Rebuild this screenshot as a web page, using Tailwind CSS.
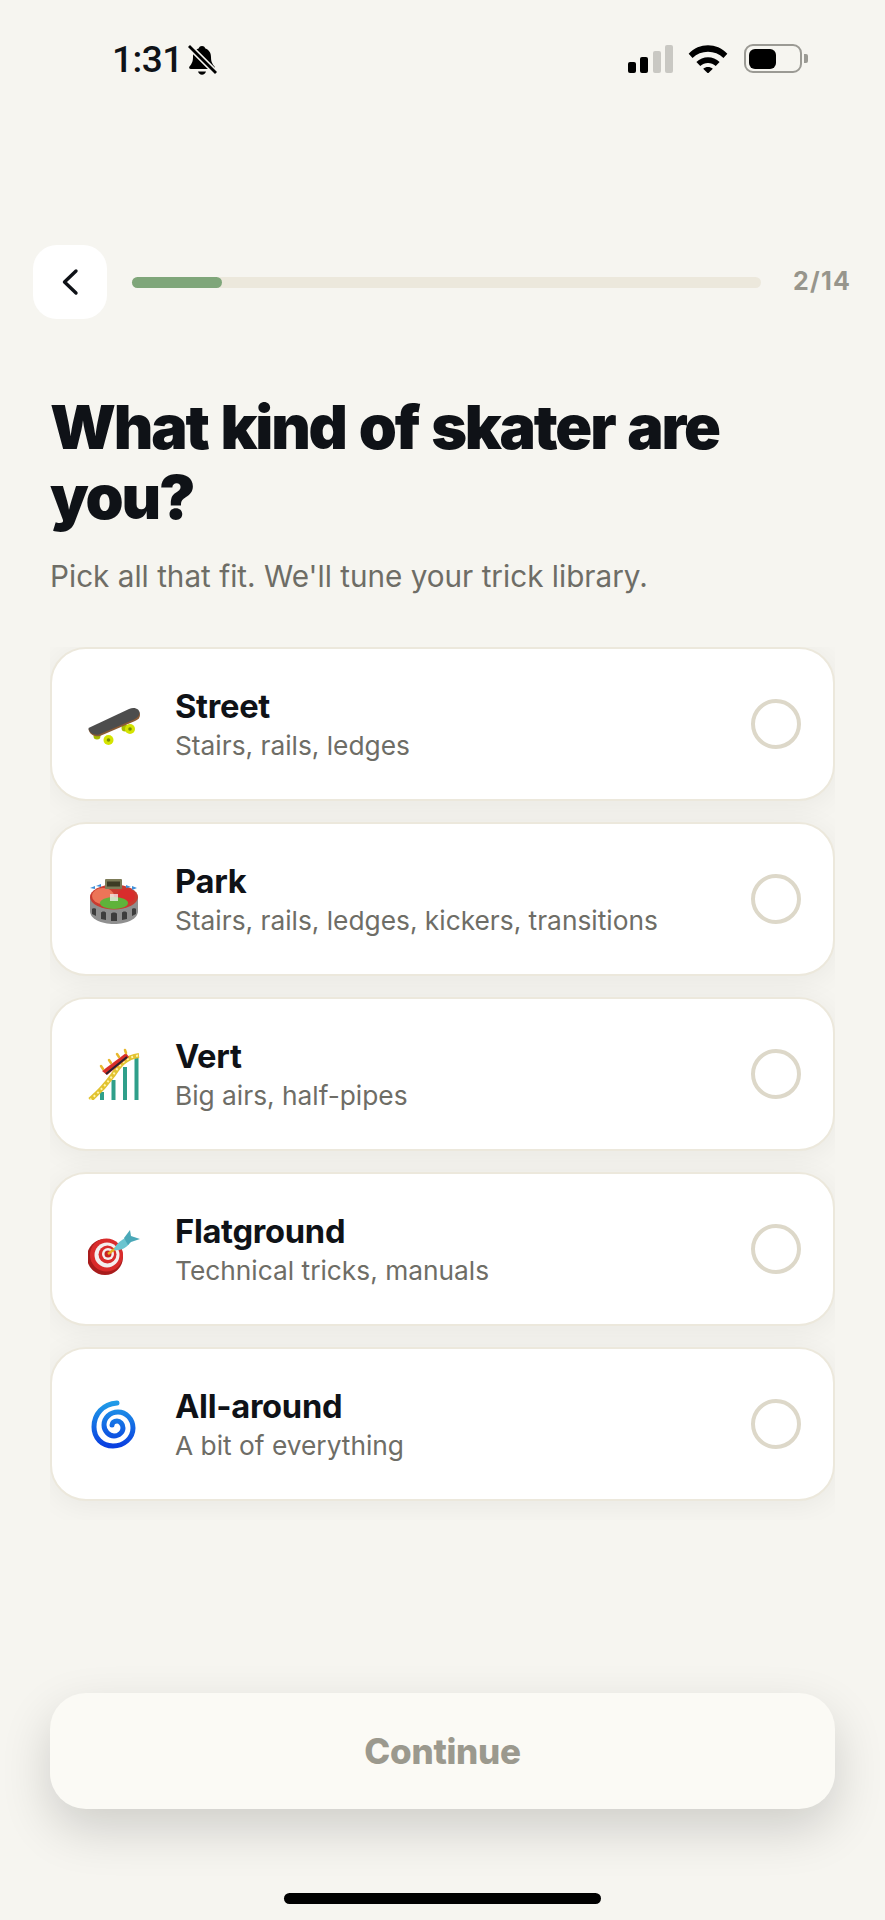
<!DOCTYPE html>
<html lang="en">

<head>
    <meta charset="UTF-8">
    <meta name="viewport" content="width=device-width, initial-scale=1.0">
    <title>Onboarding</title>
    <script src="https://cdn.jsdelivr.net/npm/@tailwindcss/browser@4"></script>
</head>

<body class="bg-[#f6f5f0] font-['Inter',sans-serif] text-[#0f1217] overflow-hidden">
    <div class="relative w-[885px] h-[1920px] flex flex-col">

        <!-- status bar -->
        <div class="h-[120px] flex items-start justify-between pl-[112px] pr-[77px] pt-[37px]">
            <div class="flex items-center gap-[4px]">
                <span class="text-[37px] leading-[46px] font-medium tracking-[-0.5px] font-['Roboto',sans-serif]">1:31</span>
                <svg width="30" height="32" viewBox="0 0 30 32">
                    <path d="M15 2c2 0 3 1.300 3.400 2.600 3.600 1.200 5.600 4.400 5.600 8.400 0 4.500 1 6.500 3.500 9.500 .8 1 .2 2.500-1.300 2.500H3.800c-1.500 0-2.100-1.500-1.300-2.500C5 19.500 6 17.500 6 13c0-4 2-7.200 5.600-8.400C12 3.300 13 2 15 2z" fill="#000" />
                    <path d="M11 27.500h8c-.5 2-2 3.200-4 3.200s-3.500-1.200-4-3.200z" fill="#000" />
                    <path d="M2 2l27 27" stroke="#f6f5f0" stroke-width="6" />
                    <path d="M2 2l27 27" stroke="#000" stroke-width="2.800" />
                </svg>
            </div>
            <div class="flex items-center gap-[15px] pt-[7px]">
                <div class="flex items-end gap-[4.500px] h-[28px]">
                    <div class="w-[8px] h-[11px] rounded-[2px] bg-black"></div>
                    <div class="w-[8px] h-[16px] rounded-[2px] bg-black"></div>
                    <div class="w-[8px] h-[22px] rounded-[2px] bg-[#c9c8c3]"></div>
                    <div class="w-[8px] h-[28px] rounded-[2px] bg-[#c9c8c3]"></div>
                </div>
                <svg width="40" height="29" viewBox="0 0 40 30">
                    <path d="M0 10C11 -1.500 29 -1.500 40 10l-4 4.500C27.500 6 12.500 6 4 14.500z" fill="#000" />
                    <path d="M8 18.500c6.500-6.500 17.500-6.500 24 0l-4 4.300c-4.500-4.300-11.500-4.300-16 0z" fill="#000" />
                    <path d="M15 25.500c2.900-2.400 7.100-2.400 10 0L20 30.500z" fill="#000" />
                </svg>
                <div class="ml-px flex items-center gap-[2px]">
                    <div class="w-[58px] h-[29px] rounded-[9px] border-[2.500px] border-[#9b9a94] p-[2.500px]">
                        <div class="w-[27px] h-full rounded-[6px] bg-black"></div>
                    </div>
                    <div class="w-[4px] h-[9px] rounded-r-[2px] bg-[#9b9a94]"></div>
                </div>
            </div>
        </div>

        <!-- top row -->
        <div class="mt-[125px] pl-[33px] pr-[34px] flex items-center">
            <button class="w-[74px] h-[74px] rounded-[24px] bg-white flex items-center justify-center">
                <svg width="24" height="30" viewBox="0 0 24 30" fill="none">
                    <path d="M18 4L6.500 15 18 26" stroke="#0f1217" stroke-width="3.400" stroke-linecap="round" stroke-linejoin="round" />
                </svg>
            </button>
            <div class="ml-[25px] w-[629px] h-[11px] rounded-full bg-[#ece8dc]">
                <div class="w-[90px] h-full rounded-full bg-[#7fa67a]"></div>
            </div>
            <span class="ml-auto text-[25px] font-bold tracking-[1.200px] text-[#97958c]">2/14</span>
        </div>

        <!-- heading -->
        <div class="px-[50px] mt-[73px]">
            <h1 class="text-[61px] leading-[70px] font-black tracking-[-2.200px] [word-spacing:3px]">What kind of skater are you?</h1>
            <p class="mt-[24px] text-[29.700px] leading-[40px] text-[#6e6d66]">Pick all that fit. We'll tune your trick library.</p>
        </div>

        <!-- options, clipped so the shadows stop at the list edge -->
        <div class="mt-[51px] mx-[50px] h-[873px] overflow-hidden flex flex-col gap-[21px]">
            <div class="h-[154px] shrink-0 rounded-[36px] bg-white border-2 border-[#ece8dc] shadow-[0_4px_30px_rgba(0,0,0,0.06)] flex items-center pl-[36px] pr-[32px]">
                <div class="w-[52px] h-[52px] shrink-0">
                    <svg viewBox="0 0 52 52" width="52" height="52">
                        <circle cx="9" cy="38" r="3.500" fill="#a8bc00" />
                        <circle cx="37" cy="30" r="3.500" fill="#a8bc00" />
                        <path d="M0.500 31 L41 12 C47 9.500 52 12.500 52 17 C52 19.500 50.500 21.500 47 23 L12 38 C7 39.500 1 36 0.500 31z" fill="#8a5a34" />
                        <path d="M0.500 30 L41 11 C47 8.500 52 11.500 51.500 15.500 C51 18 49 20 46 21.500 L11 36.500 C6 37.500 1 35 0.500 30z" fill="#4d4d4d" />
                        <circle cx="20.500" cy="42" r="5" fill="#d4e400" />
                        <circle cx="20.500" cy="42" r="1.800" fill="#7a8c00" />
                        <circle cx="42" cy="31" r="5" fill="#d4e400" />
                        <circle cx="42" cy="31" r="1.800" fill="#7a8c00" />
                    </svg>
                </div>
                <div class="ml-[35px]">
                    <p class="text-[32.700px] leading-[40px] font-bold tracking-[-0.300px]">Street</p>
                    <p class="mt-[3px] text-[26.300px] leading-[34px] text-[#6e6d66]">Stairs, rails, ledges</p>
                </div>
                <div class="ml-auto w-[50px] h-[50px] rounded-full border-[4px] border-[#ddd8c9]"></div>
            </div>

            <div class="h-[154px] shrink-0 rounded-[36px] bg-white border-2 border-[#ece8dc] shadow-[0_4px_30px_rgba(0,0,0,0.06)] flex items-center pl-[36px] pr-[32px]">
                <div class="w-[52px] h-[52px] shrink-0">
                    <svg viewBox="0 0 52 52" width="52" height="52">
                        <path d="M2 24v14c0 8 11 13 24 13s24-5 24-13V24z" fill="#8f8f8f" />
                        <ellipse cx="26" cy="24" rx="24" ry="12.500" fill="#c93b30" />
                        <ellipse cx="15" cy="23" rx="11" ry="8" fill="#ec7558" />
                        <ellipse cx="38" cy="23" rx="9" ry="7" fill="#d92c2c" />
                        <ellipse cx="26" cy="30" rx="14" ry="6" fill="#5fb33a" />
                        <rect x="22" y="21" width="8" height="7" fill="#f2f2f2" fill-opacity="0.75" />
                        <rect x="17" y="6" width="17" height="10" rx="1" fill="#7c7b58" />
                        <rect x="19" y="8.500" width="13" height="5" fill="#3c3b24" />
                        <path d="M2 15l5-2v3z M8 13l5-2v3z M38 12l5 2-5 1z M44 13l5 2-5 2z" fill="#3f8fd8" />
                        <path d="M4 36c0-1 4-1 4 0v7l-4-2z M13 40c0-2 5-2 5 0v7l-5-1z M23 41c0-2 6-2 6 0v7h-6z M34 40c0-2 5-2 5 0v6l-5 1z M44 36c0-1 4-1 4 0v5l-4 2z" fill="#3d3d3d" />
                    </svg>
                </div>
                <div class="ml-[35px]">
                    <p class="text-[32.700px] leading-[40px] font-bold tracking-[-0.300px]">Park</p>
                    <p class="mt-[3px] text-[26.300px] leading-[34px] text-[#6e6d66]">Stairs, rails, ledges, kickers, transitions</p>
                </div>
                <div class="ml-auto w-[50px] h-[50px] rounded-full border-[4px] border-[#ddd8c9]"></div>
            </div>

            <div class="h-[154px] shrink-0 rounded-[36px] bg-white border-2 border-[#ece8dc] shadow-[0_4px_30px_rgba(0,0,0,0.06)] flex items-center pl-[36px] pr-[32px]">
                <div class="w-[52px] h-[52px] shrink-0">
                    <svg viewBox="0 0 52 52" width="52" height="52">
                        <path d="M14 44v8 M25.500 32v20 M37 19v33 M48.500 10v42" stroke="#2f9f8a" stroke-width="4" fill="none" />
                        <path d="M2 52C9 46 17 38 25 27 31 18 37 9 51 7.500" stroke="#e2c330" stroke-width="5" fill="none" />
                        <path d="M2 52C9 46 17 38 25 27 31 18 37 9 51 7.500" stroke="#fff3a8" stroke-width="2" stroke-dasharray="2 3" fill="none" />
                        <path d="M14 23L38 5l3 4L19 27z" fill="#d92f2a" />
                        <path d="M18 26L39 9" stroke="#2b2430" stroke-width="2" />
                        <path d="M15 21l-2-3 M23 15l-2-3 M31 9l-2-3 M38 5l-1-3" stroke="#e8b930" stroke-width="2.500" stroke-linecap="round" />
                    </svg>
                </div>
                <div class="ml-[35px]">
                    <p class="text-[32.700px] leading-[40px] font-bold tracking-[-0.300px]">Vert</p>
                    <p class="mt-[3px] text-[26.300px] leading-[34px] text-[#6e6d66]">Big airs, half-pipes</p>
                </div>
                <div class="ml-auto w-[50px] h-[50px] rounded-full border-[4px] border-[#ddd8c9]"></div>
            </div>

            <div class="h-[154px] shrink-0 rounded-[36px] bg-white border-2 border-[#ece8dc] shadow-[0_4px_30px_rgba(0,0,0,0.06)] flex items-center pl-[36px] pr-[32px]">
                <div class="w-[52px] h-[52px] shrink-0">
                    <svg viewBox="0 0 52 52" width="52" height="52">
                        <circle cx="17" cy="34" r="18" fill="#a81c1c" />
                        <circle cx="18.500" cy="32" r="16.500" fill="#d92b2b" />
                        <circle cx="19" cy="32" r="12.500" fill="#f4efef" />
                        <circle cx="19.500" cy="31.500" r="9" fill="#d92b2b" />
                        <circle cx="20" cy="31" r="6" fill="#f4efef" />
                        <circle cx="20" cy="31" r="3.500" fill="#c92222" />
                        <path d="M20 31l8-6" stroke="#e8b020" stroke-width="2.500" />
                        <path d="M26 27c1-5 6-9 11-12l4 6c-3 4-9 7-15 6z" fill="#6cc4cf" />
                        <path d="M36 15l6-8 1 6 9 3-9 3 -3 3z" fill="#4aa8b8" />
                    </svg>
                </div>
                <div class="ml-[35px]">
                    <p class="text-[32.700px] leading-[40px] font-bold tracking-[-0.300px]">Flatground</p>
                    <p class="mt-[3px] text-[26.300px] leading-[34px] text-[#6e6d66]">Technical tricks, manuals</p>
                </div>
                <div class="ml-auto w-[50px] h-[50px] rounded-full border-[4px] border-[#ddd8c9]"></div>
            </div>

            <div class="h-[154px] shrink-0 rounded-[36px] bg-white border-2 border-[#ece8dc] shadow-[0_4px_30px_rgba(0,0,0,0.06)] flex items-center pl-[36px] pr-[32px]">
                <div class="w-[52px] h-[52px] shrink-0">
                    <svg viewBox="0 0 52 52" width="52" height="52">
                        <defs>
                            <linearGradient id="spiral" x1="0" y1="0" x2="0" y2="1">
                                <stop offset="0" stop-color="#1f9be8" />
                                <stop offset="1" stop-color="#0a3fe0" />
                            </linearGradient>
                        </defs>
                        <path d="M29 5C15 6 6 16 6 29c0 11 8 19 19 19 11 0 20-8 20-18 0-9-7-16-15-16-8 0-14 6-14 13 0 6 5 11 10 11 5 0 9-4 9-8 0-4-3-7-6-7-3 0-5 2-5 4" fill="none" stroke="url(#spiral)" stroke-width="5" stroke-linecap="round" />
                    </svg>
                </div>
                <div class="ml-[35px]">
                    <p class="text-[32.700px] leading-[40px] font-bold tracking-[-0.300px]">All-around</p>
                    <p class="mt-[3px] text-[26.300px] leading-[34px] text-[#6e6d66]">A bit of everything</p>
                </div>
                <div class="ml-auto w-[50px] h-[50px] rounded-full border-[4px] border-[#ddd8c9]"></div>
            </div>
        </div>

        <!-- footer -->
        <div class="mt-auto px-[50px] pb-[16px] flex flex-col items-center">
            <button class="w-full h-[116px] rounded-[36px] bg-[#fbfaf5] shadow-[0_20px_50px_rgba(0,0,0,0.16)] text-[35px] font-extrabold tracking-[-0.300px] text-[#9b998e]">Continue</button>
            <div class="mt-[84px] w-[317px] h-[11px] rounded-full bg-black"></div>
        </div>
    </div>
</body>

</html>
